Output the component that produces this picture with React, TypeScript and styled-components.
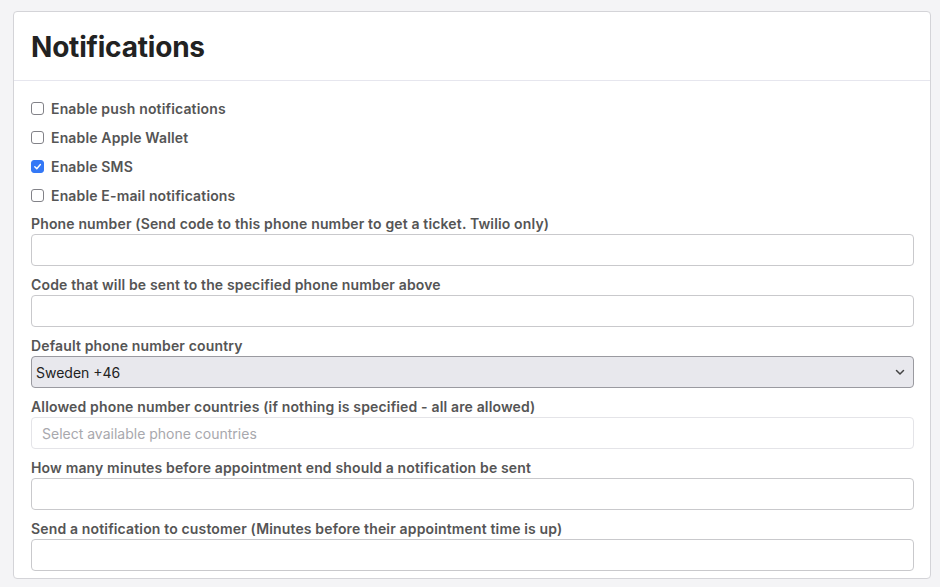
import React from "react";
import styled, { createGlobalStyle } from "styled-components";

const Global = createGlobalStyle`
  html, body { margin: 0; padding: 0; background: #f4f4f6; }
  body { font-family: Inter, "Noto Sans", sans-serif; -webkit-font-smoothing: antialiased; }
  * { box-sizing: border-box; }
`;

const Page = styled.div`
  padding: 11px 10px 8px 13px;
`;

const Card = styled.section`
  background: #fff;
  border: 1px solid #d4d4d8;
  border-radius: 4px;
  width: 918px;
`;

const Header = styled.header`
  padding: 17px 17px 15px;
  border-bottom: 1px solid #e6e6ee;
`;

const Title = styled.h1`
  margin: 0;
  font-size: 28px;
  line-height: 36px;
  font-weight: 700;
  color: #222;
  letter-spacing: -0.2px;
`;

const Body = styled.div`
  padding: 13px 16px 7px 17px;
  display: flex;
  flex-direction: column;
`;

const Checks = styled.div`
  display: flex;
  flex-direction: column;
`;

const CheckRow = styled.label`
  display: flex;
  align-items: center;
  gap: 7px;
  height: 29px;
  font-size: 14px;
  font-weight: 600;
  color: #555;
  letter-spacing: 0.15px;
`;

const Box = styled.span<{ $checked?: boolean }>`
  width: 13px;
  height: 13px;
  border-radius: 3px;
  border: 1.5px solid ${(p) => (p.$checked ? "#3478f6" : "#828288")};
  background: ${(p) => (p.$checked ? "#3478f6" : "#fff")};
  display: flex;
  align-items: center;
  justify-content: center;
`;

const Fields = styled.div`
  display: flex;
  flex-direction: column;
  gap: 9px;
  margin-top: 4px;
`;

const Field = styled.div`
  display: flex;
  flex-direction: column;
`;

const Label = styled.div`
  font-size: 14px;
  font-weight: 600;
  color: #555;
  line-height: 20px;
  letter-spacing: 0.15px;
`;

const Input = styled.div<{ $placeholder?: boolean }>`
  height: 32px;
  border: 1px solid ${(p) => (p.$placeholder ? "#e4e4e8" : "#c9c9cc")};
  border-radius: 4px;
  background: #fff;
  display: flex;
  align-items: center;
  padding: 0 10px;
  font-size: 14px;
  color: #a8a8ad;
`;

const Select = styled.div`
  height: 32px;
  border: 1px solid #9a9aa0;
  border-radius: 4px;
  background: #e8e8ed;
  display: flex;
  align-items: center;
  justify-content: space-between;
  padding: 0 8px 0 4px;
  font-size: 14px;
  color: #222;
`;

const checks = [
  { label: "Enable push notifications", checked: false },
  { label: "Enable Apple Wallet", checked: false },
  { label: "Enable SMS", checked: true },
  { label: "Enable E-mail notifications", checked: false },
];

export default function App() {
  return (
    <>
      <Global />
      <Page>
        <Card>
          <Header>
            <Title>Notifications</Title>
          </Header>
          <Body>
            <Checks>
              {checks.map((c) => (
                <CheckRow key={c.label}>
                  <Box $checked={c.checked}>
                    {c.checked && (
                      <svg width="9" height="9" viewBox="0 0 10 10">
                        <path d="M2 5.2 L4.2 7.4 L8.2 2.8" fill="none" stroke="#fff" strokeWidth="1.6" strokeLinecap="round" strokeLinejoin="round" />
                      </svg>
                    )}
                  </Box>
                  {c.label}
                </CheckRow>
              ))}
            </Checks>
            <Fields>
              <Field>
                <Label>Phone number (Send code to this phone number to get a ticket. Twilio only)</Label>
                <Input />
              </Field>
              <Field>
                <Label>Code that will be sent to the specified phone number above</Label>
                <Input />
              </Field>
              <Field>
                <Label>Default phone number country</Label>
                <Select>
                  <span>Sweden +46</span>
                  <svg width="10" height="7" viewBox="0 0 10 7">
                    <path d="M1.5 1.5 L5 5 L8.5 1.5" fill="none" stroke="#444" strokeWidth="1.5" strokeLinecap="round" strokeLinejoin="round" />
                  </svg>
                </Select>
              </Field>
              <Field>
                <Label>Allowed phone number countries (if nothing is specified - all are allowed)</Label>
                <Input $placeholder>Select available phone countries</Input>
              </Field>
              <Field>
                <Label>How many minutes before appointment end should a notification be sent</Label>
                <Input />
              </Field>
              <Field>
                <Label>Send a notification to customer (Minutes before their appointment time is up)</Label>
                <Input />
              </Field>
            </Fields>
          </Body>
        </Card>
      </Page>
    </>
  );
}
